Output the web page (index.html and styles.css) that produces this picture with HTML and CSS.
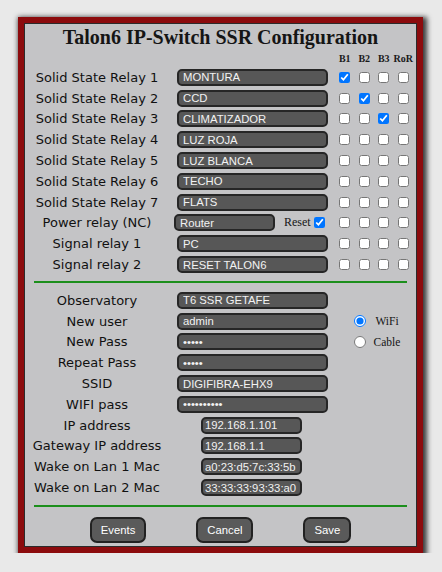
FILE: index.html
```html
<!DOCTYPE html>
<html>
<head>
<meta charset="utf-8">
<title>Talon6 IP-Switch SSR Configuration</title>
<link rel="stylesheet" href="styles.css">
</head>
<body>
<div class="frame">
  <h1 class="title">Talon6 IP-Switch SSR Configuration</h1>
  <div class="hdr">
    <span class="lbl"></span><span class="field"></span>
    <span class="h">B1</span><span class="h">B2</span><span class="h">B3</span><span class="h">RoR</span>
  </div>

  <div class="row"><span class="lbl">Solid State Relay 1</span><span class="field"><input class="txt" value="MONTURA"></span><span class="cb"><input type="checkbox" checked></span><span class="cb"><input type="checkbox"></span><span class="cb"><input type="checkbox"></span><span class="cb"><input type="checkbox"></span></div>
  <div class="row"><span class="lbl">Solid State Relay 2</span><span class="field"><input class="txt" value="CCD"></span><span class="cb"><input type="checkbox"></span><span class="cb"><input type="checkbox" checked></span><span class="cb"><input type="checkbox"></span><span class="cb"><input type="checkbox"></span></div>
  <div class="row"><span class="lbl">Solid State Relay 3</span><span class="field"><input class="txt" value="CLIMATIZADOR"></span><span class="cb"><input type="checkbox"></span><span class="cb"><input type="checkbox"></span><span class="cb"><input type="checkbox" checked></span><span class="cb"><input type="checkbox"></span></div>
  <div class="row"><span class="lbl">Solid State Relay 4</span><span class="field"><input class="txt" value="LUZ ROJA"></span><span class="cb"><input type="checkbox"></span><span class="cb"><input type="checkbox"></span><span class="cb"><input type="checkbox"></span><span class="cb"><input type="checkbox"></span></div>
  <div class="row"><span class="lbl">Solid State Relay 5</span><span class="field"><input class="txt" value="LUZ BLANCA"></span><span class="cb"><input type="checkbox"></span><span class="cb"><input type="checkbox"></span><span class="cb"><input type="checkbox"></span><span class="cb"><input type="checkbox"></span></div>
  <div class="row"><span class="lbl">Solid State Relay 6</span><span class="field"><input class="txt" value="TECHO"></span><span class="cb"><input type="checkbox"></span><span class="cb"><input type="checkbox"></span><span class="cb"><input type="checkbox"></span><span class="cb"><input type="checkbox"></span></div>
  <div class="row"><span class="lbl">Solid State Relay 7</span><span class="field"><input class="txt" value="FLATS"></span><span class="cb"><input type="checkbox"></span><span class="cb"><input type="checkbox"></span><span class="cb"><input type="checkbox"></span><span class="cb"><input type="checkbox"></span></div>
  <div class="row"><span class="lbl">Power relay (NC)</span><span class="field"><input class="txt short" value="Router"><span class="reset">Reset</span><input class="rcb" type="checkbox" checked></span><span class="cb"><input type="checkbox"></span><span class="cb"><input type="checkbox"></span><span class="cb"><input type="checkbox"></span><span class="cb"><input type="checkbox"></span></div>
  <div class="row"><span class="lbl">Signal relay 1</span><span class="field"><input class="txt" value="PC"></span><span class="cb"><input type="checkbox"></span><span class="cb"><input type="checkbox"></span><span class="cb"><input type="checkbox"></span><span class="cb"><input type="checkbox"></span></div>
  <div class="row"><span class="lbl">Signal relay 2</span><span class="field"><input class="txt" value="RESET TALON6"></span><span class="cb"><input type="checkbox"></span><span class="cb"><input type="checkbox"></span><span class="cb"><input type="checkbox"></span><span class="cb"><input type="checkbox"></span></div>

  <div class="sep"></div>

  <div class="sec2">
    <div class="row"><span class="lbl">Observatory</span><span class="field"><input class="txt" value="T6 SSR GETAFE"></span></div>
    <div class="row"><span class="lbl">New user</span><span class="field"><input class="txt" value="admin"></span><input class="radio" type="radio" name="net" checked><span class="rlbl">WiFi</span></div>
    <div class="row"><span class="lbl">New Pass</span><span class="field"><input class="txt" type="password" value="admin"></span><input class="radio" type="radio" name="net"><span class="rlbl">Cable</span></div>
    <div class="row"><span class="lbl">Repeat Pass</span><span class="field"><input class="txt" type="password" value="admin"></span></div>
    <div class="row"><span class="lbl">SSID</span><span class="field"><input class="txt" value="DIGIFIBRA-EHX9"></span></div>
    <div class="row"><span class="lbl">WIFI pass</span><span class="field"><input class="txt" type="password" value="0123456789"></span></div>
    <div class="row"><span class="lbl">IP address</span><span class="field"><input class="txt ip" value="192.168.1.101"></span></div>
    <div class="row"><span class="lbl">Gateway IP address</span><span class="field"><input class="txt ip" value="192.168.1.1"></span></div>
    <div class="row"><span class="lbl">Wake on Lan 1 Mac</span><span class="field"><input class="txt ip" value="a0:23:d5:7c:33:5b"></span></div>
    <div class="row"><span class="lbl">Wake on Lan 2 Mac</span><span class="field"><input class="txt ip" value="33:33:33:93:33:a0"></span></div>
  </div>

  <div class="sep sep2"></div>

  <div class="buttons">
    <button class="btn">Events</button>
    <button class="btn">Cancel</button>
    <button class="btn">Save</button>
  </div>
</div>
</body>
</html>
```
FILE: styles.css
```css
* { box-sizing: border-box; }

body {
  margin: 0;
  background: #e9e9e9;
  font-family: "DejaVu Sans", Verdana, sans-serif;
}

.frame {
  margin: 17px 0 0 18px;
  width: 405px;
  height: 536px;
  border: 6px solid #8c0b0d;
  background: #c4c4c6;
  box-shadow: inset 0 0 0 1px #2b2b2b, 2px 2px 5px 2px rgba(0, 0, 0, 0.75);
}

.title {
  margin: 0;
  padding-top: 3px;
  font: bold 20px/23px "Liberation Serif", "Times New Roman", serif;
  text-align: center;
  color: #151515;
}

.hdr {
  display: flex;
  align-items: center;
  height: 12px;
  margin: 4px 0 2px;
  padding-left: 8px;
}

.h {
  width: 19.5px;
  text-align: center;
  font: bold 10px/12px "Liberation Serif", serif;
  color: #1a1a1a;
  white-space: nowrap;
}

.row {
  display: flex;
  align-items: center;
  height: 20.8px;
  padding-left: 8px;
}

.lbl {
  width: 130px;
  flex: none;
  text-align: center;
  font-size: 13px;
  color: #111;
  white-space: nowrap;
}

.field {
  width: 173px;
  flex: none;
  display: flex;
  align-items: center;
}

.txt {
  margin: 0 0 0 15px;
  width: 151px;
  height: 17px;
  padding: 0 4px;
  background: #575757;
  border: 2px solid #262626;
  border-radius: 5px;
  color: #f2f2f2;
  font: 11.3px "Liberation Sans", Arial, sans-serif;
  outline: none;
}

.txt.short {
  margin-left: 12px;
  width: 101px;
}

.txt.ip {
  margin-left: 39px;
  width: 101px;
  padding: 0 2px;
}

.reset {
  margin-left: 9px;
  font: 12px "Liberation Serif", serif;
  color: #151515;
}

.rcb {
  width: 11px;
  height: 11px;
  margin: 0 0 0 3px;
}

.cb {
  width: 19.5px;
  flex: none;
  display: flex;
  justify-content: center;
}

.cb input {
  width: 11px;
  height: 11px;
  margin: 0;
}

.sep {
  height: 2px;
  margin: 6px 10px 7px;
  background: #1c8f1c;
}

.sep2 {
  margin: 7px 10px 10px;
}

.radio {
  width: 12px;
  height: 12px;
  margin: 0 0 0 19px;
}

.rlbl {
  width: 30px;
  margin-left: 6px;
  text-align: center;
  font: 11.5px "Liberation Serif", serif;
  color: #151515;
}

.buttons {
  display: flex;
  justify-content: center;
  gap: 50px;
}

.btn {
  height: 26px;
  padding: 0 9px;
  background: #5a5a5a;
  border: 2px solid #222;
  border-radius: 7px;
  color: #fff;
  font: 11.3px "Liberation Sans", Arial, sans-serif;
}
```
